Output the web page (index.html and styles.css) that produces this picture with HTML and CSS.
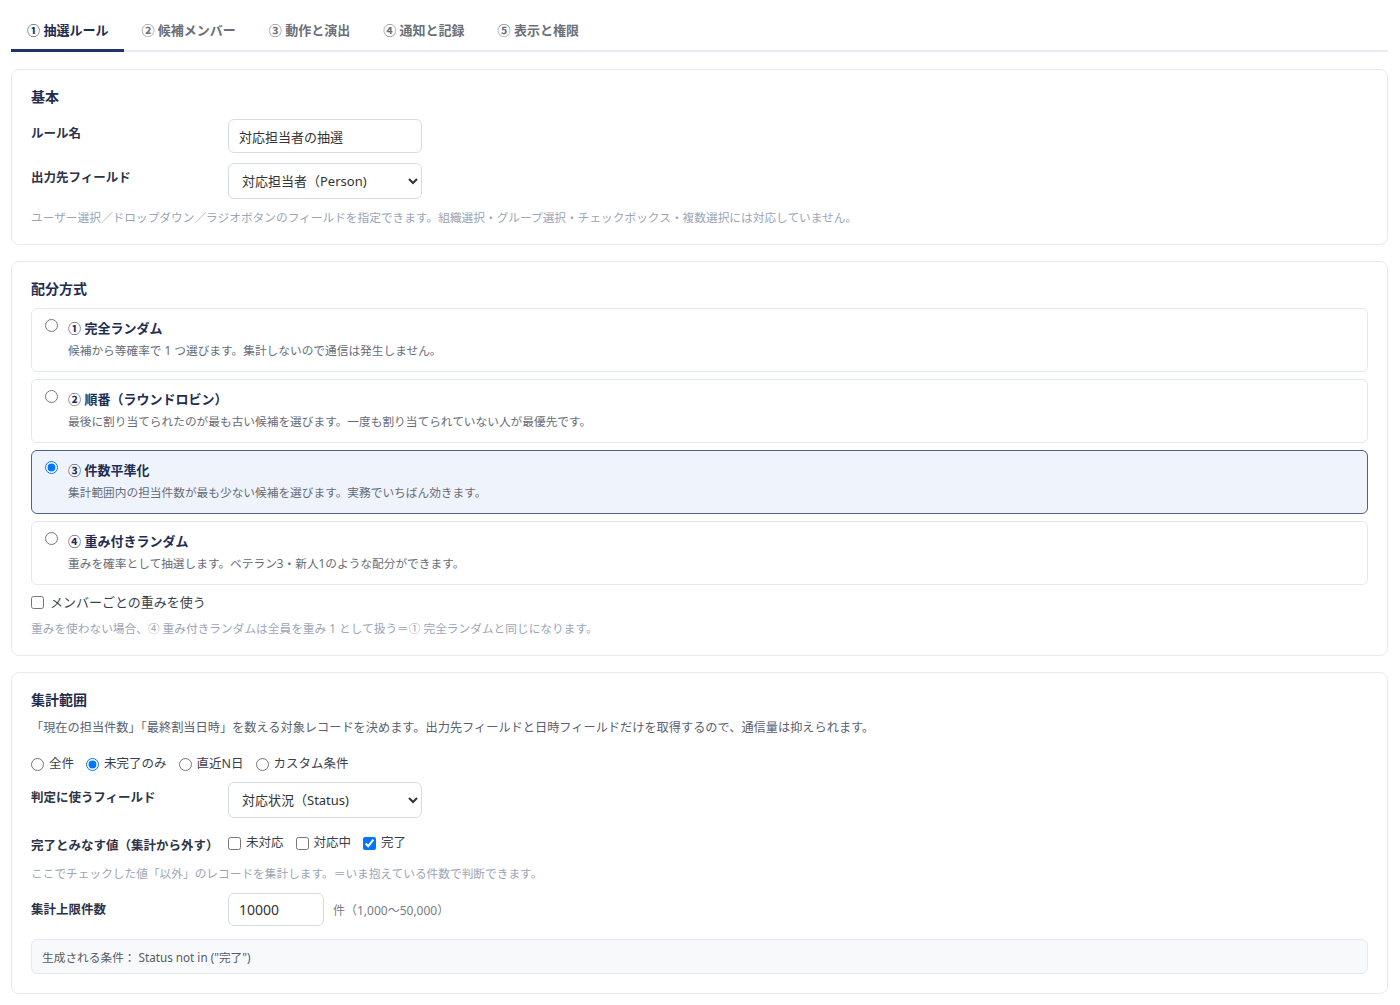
FILE: index.html
```html
<!DOCTYPE html>
<html lang="ja">
<head>
    <meta charset="UTF-8">
    <title>抽選ルール設定</title>
    <link rel="stylesheet" href="styles.css">
</head>
<body>
    <div class="page">
        <div class="tabs">
            <a href="#" class="tab active">① 抽選ルール</a>
            <a href="#" class="tab">② 候補メンバー</a>
            <a href="#" class="tab">③ 動作と演出</a>
            <a href="#" class="tab">④ 通知と記録</a>
            <a href="#" class="tab">⑤ 表示と権限</a>
        </div>

        <!-- 基本 -->
        <div class="card">
            <div class="card-title">基本</div>
            <div class="field first">
                <label class="field-label">ルール名</label>
                <input type="text" class="text-input" value="対応担当者の抽選">
            </div>
            <div class="field">
                <label class="field-label">出力先フィールド</label>
                <select class="select-input">
                    <option>対応担当者（Person)</option>
                </select>
            </div>
            <div class="help">ユーザー選択／ドロップダウン／ラジオボタンのフィールドを指定できます。組織選択・グループ選択・チェックボックス・複数選択には対応していません。</div>
        </div>

        <!-- 配分方式 -->
        <div class="card">
            <div class="card-title">配分方式</div>
            <div class="options">
                <label class="option">
                    <input type="radio" name="method">
                    <div class="option-body">
                        <div class="option-title">① 完全ランダム</div>
                        <div class="option-desc">候補から等確率で 1 つ選びます。集計しないので通信は発生しません。</div>
                    </div>
                </label>
                <label class="option">
                    <input type="radio" name="method">
                    <div class="option-body">
                        <div class="option-title">② 順番（ラウンドロビン）</div>
                        <div class="option-desc">最後に割り当てられたのが最も古い候補を選びます。一度も割り当てられていない人が最優先です。</div>
                    </div>
                </label>
                <label class="option selected">
                    <input type="radio" name="method" checked>
                    <div class="option-body">
                        <div class="option-title">③ 件数平準化</div>
                        <div class="option-desc">集計範囲内の担当件数が最も少ない候補を選びます。実務でいちばん効きます。</div>
                    </div>
                </label>
                <label class="option">
                    <input type="radio" name="method">
                    <div class="option-body">
                        <div class="option-title">④ 重み付きランダム</div>
                        <div class="option-desc">重みを確率として抽選します。ベテラン3・新人1のような配分ができます。</div>
                    </div>
                </label>
            </div>
            <label class="check-row">
                <input type="checkbox">
                <span>メンバーごとの重みを使う</span>
            </label>
            <div class="help">重みを使わない場合、④ 重み付きランダムは全員を重み 1 として扱う＝① 完全ランダムと同じになります。</div>
        </div>

        <!-- 集計範囲 -->
        <div class="card">
            <div class="card-title">集計範囲</div>
            <div class="card-desc">「現在の担当件数」「最終割当日時」を数える対象レコードを決めます。出力先フィールドと日時フィールドだけを取得するので、通信量は抑えられます。</div>
            <div class="inline-choices scope">
                <label><input type="radio" name="scope"> 全件</label>
                <label><input type="radio" name="scope" checked> 未完了のみ</label>
                <label><input type="radio" name="scope"> 直近N日</label>
                <label><input type="radio" name="scope"> カスタム条件</label>
            </div>
            <div class="field status-field">
                <label class="field-label">判定に使うフィールド</label>
                <select class="select-input">
                    <option>対応状況（Status)</option>
                </select>
            </div>
            <div class="field done-field">
                <label class="field-label">完了とみなす値（集計から外す）</label>
                <div class="inline-choices">
                    <label><input type="checkbox"> 未対応</label>
                    <label><input type="checkbox"> 対応中</label>
                    <label><input type="checkbox" checked> 完了</label>
                </div>
            </div>
            <div class="help">ここでチェックした値「以外」のレコードを集計します。＝いま抱えている件数で判断できます。</div>
            <div class="field limit-field">
                <label class="field-label">集計上限件数</label>
                <input type="text" class="text-input small" value="10000">
                <span class="unit">件（1,000〜50,000）</span>
            </div>
            <div class="condition">生成される条件： Status not in ("完了")</div>
        </div>
    </div>
</body>
</html>
```

FILE: styles.css
```css
body {
    margin: 0;
    font-family: "Noto Sans", "Noto Sans CJK JP", sans-serif;
    color: #2d3348;
    background: #fff;
}
.page {
    padding: 8px 12px 10px 11px;
}

/* tabs */
.tabs {
    display: flex;
    border-bottom: 2px solid #e6eaf1;
}
.tab {
    padding: 12px 16px 9px;
    font-size: 13px;
    line-height: 20px;
    font-weight: 700;
    color: #6b6f78;
    text-decoration: none;
    margin-bottom: -2px;
    border-bottom: 3px solid transparent;
}
.tab + .tab {
    margin-left: 1px;
}
.tab.active {
    color: #1f2d50;
    border-bottom-color: #1f3468;
}

/* cards */
.card {
    border: 1px solid #e6eaf0;
    border-radius: 8px;
    padding: 17px 19px 19px 19px;
    margin-top: 16px;
}
.tabs + .card {
    margin-top: 17px;
}
.card-title {
    font-size: 14px;
    line-height: 20px;
    font-weight: 700;
    color: #1f2d50;
}
.card-desc {
    margin-top: 8px;
    font-size: 12.2px;
    line-height: 20px;
    color: #5b6170;
}
.help {
    margin-top: 8px;
    font-size: 11.7px;
    line-height: 16px;
    color: #9ba5b6;
}

/* label + control rows */
.field {
    display: flex;
    align-items: flex-start;
    margin-top: 10px;
}
.field.first {
    margin-top: 12px;
}
.field-label {
    width: 197px;
    flex-shrink: 0;
    padding-top: 6px;
    font-size: 12.5px;
    line-height: 18px;
    font-weight: 700;
    color: #2d3348;
}
.text-input {
    width: 194px;
    height: 34px;
    box-sizing: border-box;
    border: 1px solid #d6dce6;
    border-radius: 6px;
    padding: 0 10px;
    font-family: inherit;
    font-size: 13px;
    color: #333;
    outline: none;
}
.text-input.small {
    width: 96px;
    height: 33px;
    font-size: 14px;
}
.select-input {
    width: 194px;
    height: 36px;
    box-sizing: border-box;
    border: 1px solid #d6dce6;
    border-radius: 6px;
    padding: 0 6px 0 9px;
    background: #fff;
    font-family: inherit;
    font-size: 13px;
    color: #333;
}
.card .field + .help {
    margin-top: 10px;
}

/* distribution options */
.options {
    display: flex;
    flex-direction: column;
    gap: 7px;
    margin-top: 9px;
}
.option {
    display: flex;
    align-items: flex-start;
    border: 1px solid #e3e7ee;
    border-radius: 6px;
    padding: 9px 14px 12px 13px;
    cursor: pointer;
}
.option.selected {
    background: #eff4fc;
    border-color: #4d6189;
}
.option input {
    margin: 1px 10px 0 0;
    width: 13px;
    height: 13px;
}
.option-title {
    font-size: 13px;
    line-height: 20px;
    font-weight: 700;
    color: #1f2d50;
}
.option-desc {
    margin-top: 3px;
    font-size: 11.7px;
    line-height: 18px;
    color: #666c78;
}

.check-row {
    display: flex;
    align-items: center;
    margin-top: 8px;
    font-size: 13px;
    line-height: 18px;
    color: #3a3f4c;
}
.check-row input {
    margin: 0 6px 0 0;
}
.check-row + .help {
    margin-top: 9px;
}

/* inline radio / checkbox lists */
.inline-choices {
    display: flex;
    gap: 12px;
    font-size: 12.5px;
    line-height: 20px;
    color: #3a3f4c;
}
.inline-choices label {
    display: flex;
    align-items: center;
    gap: 5px;
}
.inline-choices input {
    margin: 0;
}
.scope {
    margin-top: 16px;
}
.status-field {
    margin-top: 8px;
}
.status-field .field-label {
    padding-top: 7px;
}
.done-field {
    margin-top: 15px;
}
.done-field .field-label {
    padding-top: 4px;
}
.done-field .inline-choices {
    gap: 12px;
}
.done-field + .help {
    margin-top: 14px;
}
.limit-field {
    margin-top: 12px;
    align-items: center;
}
.limit-field .field-label {
    padding-top: 0;
}
.unit {
    margin-left: 9px;
    font-size: 12px;
    color: #777c87;
}

.condition {
    margin-top: 13px;
    height: 35px;
    box-sizing: border-box;
    display: flex;
    align-items: center;
    padding: 0 10px;
    background: #f7f9fb;
    border: 1px solid #e5e9f0;
    border-radius: 6px;
    font-size: 11.7px;
    color: #555b66;
}
```
